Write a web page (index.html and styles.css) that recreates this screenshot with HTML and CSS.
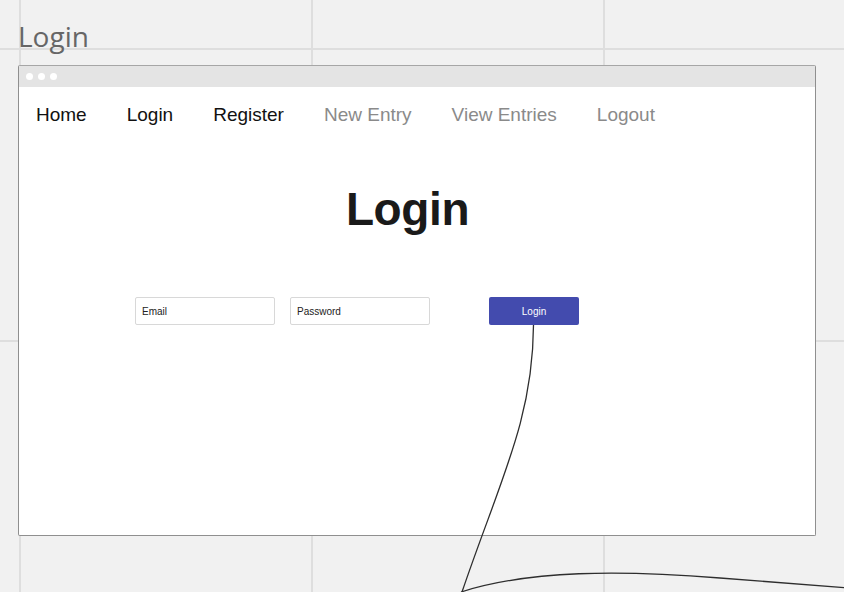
FILE: index.html
```html
<!DOCTYPE html>
<html lang="en">
<head>
<meta charset="utf-8">
<title>Login</title>
<link rel="stylesheet" href="styles.css">
</head>
<body>
<div class="canvas">
  <h2 class="frame-label">Login</h2>
  <div class="window">
    <div class="titlebar">
      <span class="dot"></span><span class="dot"></span><span class="dot"></span>
    </div>
    <nav class="nav">
      <a class="nav-item">Home</a>
      <a class="nav-item">Login</a>
      <a class="nav-item">Register</a>
      <a class="nav-item muted">New Entry</a>
      <a class="nav-item muted">View Entries</a>
      <a class="nav-item muted">Logout</a>
    </nav>
    <h1 class="page-title">Login</h1>
    <div class="form-row">
      <div class="field">Email</div>
      <div class="field">Password</div>
      <div class="btn">Login</div>
    </div>
  </div>
  <svg class="connectors" width="844" height="592" viewBox="0 0 844 592">
    <path d="M533.5 325 C533 420, 500 480, 462 592" />
    <path d="M461 592 C530 570, 620 570, 720 578 S840 587, 900 592" />
  </svg>
</div>
</body>
</html>
```
FILE: styles.css
```css
html, body {
  margin: 0;
  padding: 0;
}
body {
  width: 844px;
  height: 592px;
  overflow: hidden;
  background-color: #f1f1f1;
  background-image:
    linear-gradient(to right, #dedede 2px, transparent 2px),
    linear-gradient(to bottom, #dedede 2px, transparent 2px);
  background-size: 292px 292px;
  background-position: 19px 48px;
}
.canvas {
  position: relative;
  width: 844px;
  height: 592px;
  padding-top: 17px;
  box-sizing: border-box;
}
.frame-label {
  margin: 0 0 10px 18px;
  font-family: "Open Sans", sans-serif;
  font-weight: 400;
  font-size: 28px;
  line-height: 38px;
  color: #666666;
}
.window {
  margin-left: 18px;
  width: 798px;
  height: 471px;
  box-sizing: border-box;
  border: 1px solid #8f8f8f;
  border-top-color: #a6a6a6;
  border-radius: 2px;
  background: #ffffff;
  display: flex;
  flex-direction: column;
}
.titlebar {
  height: 21px;
  background: #e4e4e4;
  display: flex;
  align-items: center;
  gap: 5px;
  padding-left: 7px;
  flex-shrink: 0;
}
.dot {
  width: 7px;
  height: 7px;
  border-radius: 50%;
  background: #ffffff;
}
.nav {
  display: flex;
  gap: 40px;
  padding: 17px 0 0 17px;
  font-family: "Liberation Sans", Arial, sans-serif;
  font-size: 19px;
  line-height: 22px;
}
.nav-item {
  color: #111111;
}
.nav-item.muted {
  color: #8a8a8a;
}
.page-title {
  margin: 56px 19px 0 0;
  text-align: center;
  font-family: "Liberation Sans", Arial, sans-serif;
  font-weight: 700;
  font-size: 46px;
  line-height: 54px;
  letter-spacing: -0.4px;
  color: #1a1a1a;
}
.form-row {
  display: flex;
  align-items: center;
  margin-top: 61px;
  padding-left: 116px;
  font-family: "Liberation Sans", Arial, sans-serif;
  font-size: 10px;
}
.field {
  width: 140px;
  height: 28px;
  box-sizing: border-box;
  border: 1px solid #d8d8d8;
  border-radius: 2px;
  padding-left: 6px;
  display: flex;
  align-items: center;
  color: #222222;
}
.field + .field {
  margin-left: 15px;
}
.btn {
  margin-left: 59px;
  width: 90px;
  height: 28px;
  background: #434bae;
  border-radius: 2px;
  color: #ffffff;
  display: flex;
  align-items: center;
  justify-content: center;
}
.connectors {
  position: absolute;
  left: 0;
  top: 0;
  pointer-events: none;
  fill: none;
  stroke: #2e2e2e;
  stroke-width: 1.3;
}
```
